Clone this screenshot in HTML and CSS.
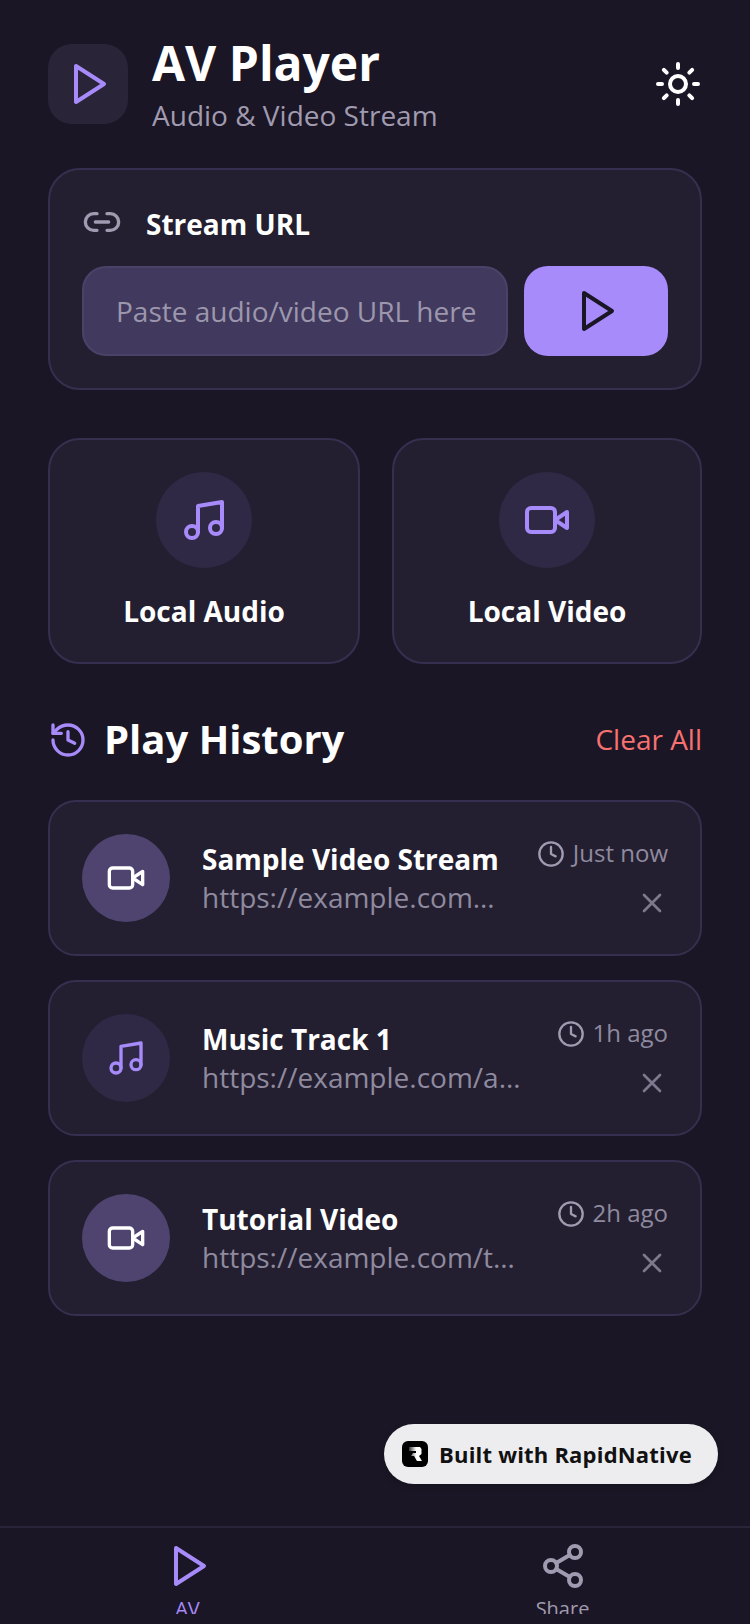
FILE: index.html
```html
<!DOCTYPE html>
<html lang="en">
<head>
    <meta charset="UTF-8">
    <title>AV Player</title>
    <link rel="stylesheet" href="styles.css">
</head>

<body>
<div class="app">
    <div class="main">
        <div class="header">
            <div class="logo">
                <svg class="icon icon48 purple" viewBox="0 0 24 24"><polygon points="6 3 20 12 6 21 6 3"/></svg>
            </div>
            <div class="brand">
                <h1 class="title">AV Player</h1>
                <p class="subtitle">Audio &amp; Video Stream</p>
            </div>
            <svg class="icon icon48 white" viewBox="0 0 24 24">
                <circle cx="12" cy="12" r="4"/>
                <path d="M12 2v2M12 20v2M4.93 4.93l1.41 1.41M17.66 17.66l1.41 1.41M2 12h2M20 12h2M6.34 17.66l-1.41 1.41M19.07 4.93l-1.41 1.41"/>
            </svg>
        </div>

        <div class="card stream">
            <div class="stream-head">
                <svg class="icon icon40 grey link-icon" viewBox="0 0 24 24">
                    <path d="M9 17H7A5 5 0 0 1 7 7h2"/>
                    <path d="M15 7h2a5 5 0 1 1 0 10h-2"/>
                    <line x1="8" y1="12" x2="16" y2="12"/>
                </svg>
                <span class="stream-title">Stream URL</span>
            </div>
            <div class="stream-row">
                <div class="url-input">Paste audio/video URL here</div>
                <button class="go">
                    <svg class="icon icon48 dark" viewBox="0 0 24 24"><polygon points="6 3 20 12 6 21 6 3"/></svg>
                </button>
            </div>
        </div>

        <div class="locals">
            <div class="card local">
                <div class="circle">
                    <svg class="icon icon48 purple" viewBox="0 0 24 24">
                        <path d="M9 18V5l12-2v13"/>
                        <circle cx="6" cy="18" r="3"/>
                        <circle cx="18" cy="16" r="3"/>
                    </svg>
                </div>
                <span class="local-name">Local Audio</span>
            </div>
            <div class="card local">
                <div class="circle">
                    <svg class="icon icon48 purple" viewBox="0 0 24 24">
                        <path d="m22 8-6 4 6 4V8Z"/>
                        <rect x="2" y="6" width="14" height="12" rx="2"/>
                    </svg>
                </div>
                <span class="local-name">Local Video</span>
            </div>
        </div>

        <div class="history-head">
            <svg class="icon icon40 purple history-icon" viewBox="0 0 24 24">
                <path d="M3 12a9 9 0 1 0 9-9 9.75 9.75 0 0 0-6.74 2.74L3 8"/>
                <path d="M3 3v5h5"/>
                <path d="M12 7v5l4 2"/>
            </svg>
            <h2 class="history-title">Play History</h2>
            <span class="clear">Clear All</span>
        </div>

        <ul class="history">
            <li class="card item">
                <div class="avatar active">
                    <svg class="icon icon40 white" viewBox="0 0 24 24">
                        <path d="m22 8-6 4 6 4V8Z"/>
                        <rect x="2" y="6" width="14" height="12" rx="2"/>
                    </svg>
                </div>
                <div class="info">
                    <div class="name">Sample Video Stream</div>
                    <div class="link">https://example.com/sample-video.mp4</div>
                </div>
                <div class="side">
                    <div class="time">
                        <svg class="icon icon28 grey" viewBox="0 0 24 24"><circle cx="12" cy="12" r="10"/><path d="M12 6v6l4 2"/></svg>
                        <span class="time-text">Just now</span>
                    </div>
                    <svg class="icon icon32 muted" viewBox="0 0 24 24"><path d="M18 6 6 18M6 6l12 12"/></svg>
                </div>
            </li>
            <li class="card item">
                <div class="avatar">
                    <svg class="icon icon40 purple" viewBox="0 0 24 24">
                        <path d="M9 18V5l12-2v13"/>
                        <circle cx="6" cy="18" r="3"/>
                        <circle cx="18" cy="16" r="3"/>
                    </svg>
                </div>
                <div class="info">
                    <div class="name">Music Track 1</div>
                    <div class="link">https://example.com/audio-track.mp3</div>
                </div>
                <div class="side">
                    <div class="time">
                        <svg class="icon icon28 grey" viewBox="0 0 24 24"><circle cx="12" cy="12" r="10"/><path d="M12 6v6l4 2"/></svg>
                        <span class="time-text">1h ago</span>
                    </div>
                    <svg class="icon icon32 muted" viewBox="0 0 24 24"><path d="M18 6 6 18M6 6l12 12"/></svg>
                </div>
            </li>
            <li class="card item">
                <div class="avatar active">
                    <svg class="icon icon40 white" viewBox="0 0 24 24">
                        <path d="m22 8-6 4 6 4V8Z"/>
                        <rect x="2" y="6" width="14" height="12" rx="2"/>
                    </svg>
                </div>
                <div class="info">
                    <div class="name">Tutorial Video</div>
                    <div class="link">https://example.com/tutorial.mp4</div>
                </div>
                <div class="side">
                    <div class="time">
                        <svg class="icon icon28 grey" viewBox="0 0 24 24"><circle cx="12" cy="12" r="10"/><path d="M12 6v6l4 2"/></svg>
                        <span class="time-text">2h ago</span>
                    </div>
                    <svg class="icon icon32 muted" viewBox="0 0 24 24"><path d="M18 6 6 18M6 6l12 12"/></svg>
                </div>
            </li>
        </ul>
    </div>

    <div class="badge">
        <span class="badge-logo">
            <svg viewBox="0 0 26 26">
                <defs>
                    <linearGradient id="rfade" x1="0" y1="0" x2="1" y2="0">
                        <stop offset="0" stop-color="#333"/>
                        <stop offset="0.55" stop-color="#fff"/>
                    </linearGradient>
                </defs>
                <path fill="url(#rfade)" d="M7 6h11l1.500 2v5l-2.500 2 3 5h-5l-3-5h-3l2-3h3v-2H7z"/>
            </svg>
        </span>
        <span class="badge-text">Built with RapidNative</span>
    </div>

    <div class="tabs">
        <div class="tab on">
            <svg class="icon icon48" viewBox="0 0 24 24"><polygon points="6 3 20 12 6 21 6 3"/></svg>
            <span class="tab-label">AV</span>
        </div>
        <div class="tab">
            <svg class="icon icon48" viewBox="0 0 24 24">
                <circle cx="18" cy="5" r="3"/>
                <circle cx="6" cy="12" r="3"/>
                <circle cx="18" cy="19" r="3"/>
                <line x1="8.59" y1="13.51" x2="15.42" y2="17.49"/>
                <line x1="15.41" y1="6.51" x2="8.59" y2="10.49"/>
            </svg>
            <span class="tab-label">Share</span>
        </div>
    </div>
</div>
</body>
</html>
```

FILE: styles.css
```css
* {
    margin: 0;
    padding: 0;
    box-sizing: border-box;
}

html, body {
    height: 100%;
}

body {
    background-color: #1a1625;
    font-family: "Open Sans", "Noto Sans", sans-serif;
    color: #fff;
}

.app {
    position: relative;
    height: 1624px;
    display: flex;
    flex-direction: column;
    overflow: hidden;
}

.main {
    flex: 1;
    padding: 44px 48px 0;
}

/* icons */
.icon {
    display: block;
    flex-shrink: 0;
    fill: none;
    stroke: currentColor;
    stroke-width: 2;
    stroke-linecap: round;
    stroke-linejoin: round;
}

.icon28 { width: 28px; height: 28px; }
.icon32 { width: 32px; height: 32px; }
.icon40 { width: 40px; height: 40px; }
.icon48 { width: 48px; height: 48px; }

.purple { color: #a78bfa; }
.white { color: #fff; }
.grey { color: #a09bb0; }
.muted { color: #7d788c; }
.dark { color: #1a1625; }

/* header */
.header {
    display: flex;
    align-items: center;
    height: 80px;
}

.logo {
    width: 80px;
    height: 80px;
    border-radius: 24px;
    background-color: #2a2438;
    display: flex;
    align-items: center;
    justify-content: center;
}

.brand {
    flex: 1;
    margin-left: 24px;
    padding-top: 4px;
}

.title {
    font-size: 48px;
    line-height: 52px;
    font-weight: 700;
}

.subtitle {
    font-size: 28px;
    line-height: 40px;
    margin-top: 6px;
    color: #a09bb0;
}

/* cards */
.card {
    background-color: #231f30;
    border: 2px solid #372f4f;
    border-radius: 32px;
}

.stream {
    margin-top: 44px;
    height: 222px;
    padding: 32px;
}

.stream-head {
    display: flex;
    align-items: center;
    gap: 24px;
    height: 44px;
}

.link-icon {
    margin-top: -4px;
}

.stream-title {
    font-size: 28px;
    font-weight: 700;
}

.stream-row {
    display: flex;
    gap: 16px;
    margin-top: 20px;
}

.url-input {
    flex: 1;
    height: 90px;
    padding: 0 32px;
    display: flex;
    align-items: center;
    font-size: 28px;
    color: #9c97ad;
    background-color: #413a5e;
    border: 2px solid #4a4368;
    border-radius: 24px;
    white-space: nowrap;
    overflow: hidden;
}

.go {
    width: 144px;
    height: 90px;
    border: none;
    border-radius: 24px;
    background-color: #a78bfa;
    display: flex;
    align-items: center;
    justify-content: center;
}

.locals {
    display: grid;
    grid-template-columns: 312px 310px;
    gap: 32px;
    margin-top: 48px;
}

.local {
    height: 226px;
    display: flex;
    flex-direction: column;
    align-items: center;
    padding-top: 32px;
}

.circle {
    width: 96px;
    height: 96px;
    border-radius: 50%;
    background-color: #2f2945;
    display: flex;
    align-items: center;
    justify-content: center;
}

.local-name {
    margin-top: 24px;
    font-size: 28px;
    line-height: 38px;
    font-weight: 700;
}

/* history */
.history-head {
    display: flex;
    align-items: center;
    gap: 16px;
    margin-top: 46px;
    height: 58px;
}

.history-icon {
    margin-top: 2px;
}

.history-title {
    flex: 1;
    padding-bottom: 2px;
    font-size: 40px;
    font-weight: 700;
}

.clear {
    font-size: 28px;
    color: #f87171;
}

.history {
    list-style: none;
    margin-top: 32px;
}

.item {
    height: 156px;
    margin-bottom: 24px;
    padding: 0 32px;
    border-radius: 28px;
    display: flex;
    align-items: center;
}

.avatar {
    width: 88px;
    height: 88px;
    border-radius: 50%;
    background-color: #2f2945;
    display: flex;
    align-items: center;
    justify-content: center;
    flex-shrink: 0;
}

.avatar.active {
    background-color: #4f4470;
}

.info {
    flex: 1;
    min-width: 0;
    margin: 0 32px;
}

.name {
    font-size: 28px;
    line-height: 38px;
    font-weight: 700;
    white-space: nowrap;
}

.link {
    font-size: 28px;
    line-height: 38px;
    color: #8f8a9f;
    white-space: nowrap;
    overflow: hidden;
    text-overflow: ellipsis;
}

.side {
    display: flex;
    flex-direction: column;
    align-items: flex-end;
    gap: 14px;
    margin-top: -2px;
}

.time {
    display: flex;
    align-items: center;
    gap: 8px;
    font-size: 24px;
    line-height: 36px;
    color: #8f8a9f;
}

.time-text {
    padding-bottom: 2px;
}

/* floating badge */
.badge {
    position: absolute;
    left: 384px;
    top: 1424px;
    width: 334px;
    height: 60px;
    display: flex;
    align-items: center;
    gap: 11px;
    padding-left: 18px;
    border-radius: 30px;
    background-color: #ededf0;
    box-shadow: 0 2px 6px rgba(0, 0, 0, .2);
}

.badge-logo {
    width: 26px;
    height: 26px;
    border-radius: 6px;
    background-color: #000;
}

.badge-logo svg {
    display: block;
}

.badge-text {
    font-size: 22px;
    letter-spacing: .2px;
    font-weight: 700;
    color: #111;
}

/* bottom tabs */
.tabs {
    display: flex;
    height: 88px;
    margin-bottom: 10px;
    border-top: 2px solid #2a2438;
    overflow: hidden;
}

.tab {
    flex: 1;
    display: flex;
    flex-direction: column;
    align-items: center;
    padding-top: 14px;
    color: #a09bb0;
}

.tab.on {
    color: #a78bfa;
}

.tab-label {
    margin-top: 5px;
    font-size: 20px;
    line-height: 28px;
}
```
